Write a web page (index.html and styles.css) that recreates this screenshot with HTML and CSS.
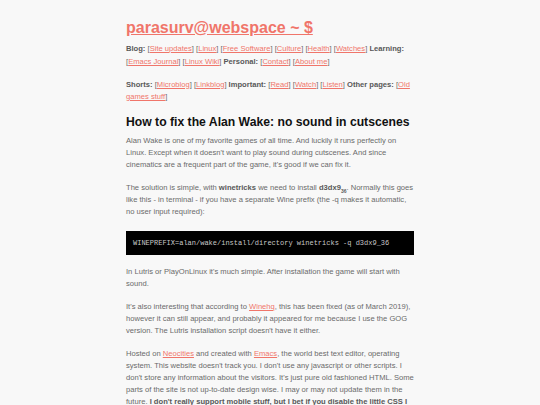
FILE: index.html
```html
<!DOCTYPE html>
<html>
<head>
<meta charset="utf-8">
<link rel="stylesheet" href="styles.css">
</head>
<body>
<div class="page">
  <h1 class="site-title"><a href="#">parasurv@webspace ~ $</a></h1>
  <p class="nav"><b>Blog:</b> [<a href="#">Site updates</a>] [<a href="#">Linux</a>] [<a href="#">Free Software</a>] [<a href="#">Culture</a>] [<a href="#">Health</a>] [<a href="#">Watches</a>] <b>Learning:</b> [<a href="#">Emacs Journal</a>] [<a href="#">Linux Wiki</a>] <b>Personal:</b> [<a href="#">Contact</a>] [<a href="#">About me</a>]</p>
  <p class="nav"><b>Shorts:</b> [<a href="#">Microblog</a>] [<a href="#">Linkblog</a>] <b>Important:</b> [<a href="#">Read</a>] [<a href="#">Watch</a>] [<a href="#">Listen</a>] <b>Other pages:</b> [<a href="#">Old games stuff</a>]</p>
  <h2 class="post-title">How to fix the Alan Wake: no sound in cutscenes</h2>
  <p>Alan Wake is one of my favorite games of all time. And luckily it runs perfectly on Linux. Except when it doesn't want to play sound during cutscenes. And since cinematics are a frequent part of the game, it's good if we can fix it.</p>
  <p>The solution is simple, with <b>winetricks</b> we need to install <b>d3dx9<sub>36</sub></b>. Normally this goes like this - in terminal - if you have a separate Wine prefix (the -q makes it automatic, no user input required):</p>
  <pre class="code">WINEPREFIX=alan/wake/install/directory winetricks -q d3dx9_36</pre>
  <p>In Lutris or PlayOnLinux it's much simple. After installation the game will start with sound.</p>
  <p>It's also interesting that according to <a href="#">Winehq</a>, this has been fixed (as of March 2019), however it can still appear, and probably it appeared for me because I use the GOG version. The Lutris installation script doesn't have it either.</p>
  <p class="footer">Hosted on <a href="#">Neocities</a> and created with <a href="#">Emacs</a>, the world best text editor, operating system. This website doesn't track you. I don't use any javascript or other scripts. I don't store any information about the visitors. It's just pure old fashioned HTML. Some parts of the site is not up-to-date design wise. I may or may not update them in the future. <b>I don't really support mobile stuff, but I bet if you disable the little CSS I use, it will work just fine.</b></p>
</div>
</body>
</html>
```

FILE: styles.css
```css
html, body {
  margin: 0;
  padding: 0;
  background: #f8f8f8;
}
.page {
  width: 288px;
  margin: 0 auto;
  padding-top: 16px;
  font-family: "Liberation Sans", Arial, sans-serif;
  font-size: 7.6px;
  line-height: 12px;
  color: #6a6a6a;
}
a {
  color: #f0756a;
}
b {
  color: #585858;
}
.site-title {
  font-size: 16px;
  line-height: 24px;
  font-weight: bold;
  margin: 0 0 3px 0;
}
.site-title a {
  color: #f0756a;
}
.nav {
  margin: 0 0 10.5px 0;
  line-height: 12.5px;
}
.post-title {
  font-size: 12.2px;
  line-height: 16px;
  color: #111;
  margin: 0 0 5px 0;
}
p {
  margin: 0 0 11px 0;
}
sub {
  font-size: 5px;
  line-height: 0;
}
.code {
  background: #000;
  color: #c8c8c8;
  font-family: "Liberation Mono", "Courier New", monospace;
  font-size: 7px;
  line-height: 10px;
  padding: 7px 7px;
  margin: 13px 0 11px 0;
}
```
